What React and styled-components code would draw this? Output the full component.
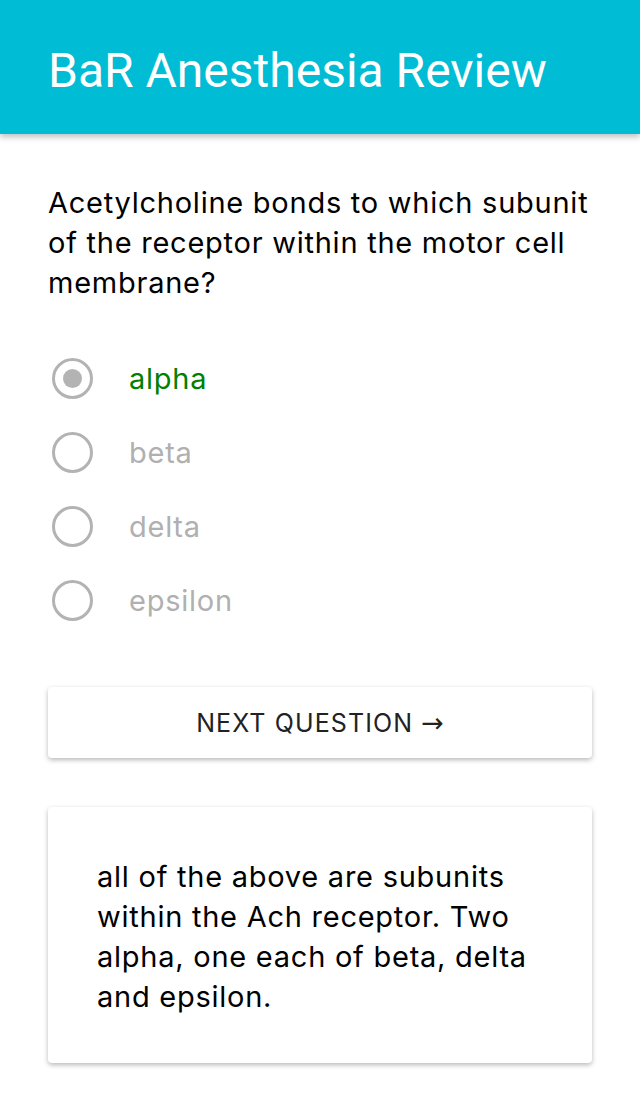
import styled, { createGlobalStyle } from "styled-components";

const Global = createGlobalStyle`
  body {
    margin: 0;
    background: #ffffff;
    font-family: Inter, "Noto Sans", sans-serif;
  }
`;

const Header = styled.header`
  height: 134px;
  box-sizing: border-box;
  background: #00bcd4;
  display: flex;
  align-items: center;
  padding: 6px 48px 0;
  box-shadow: 0 3px 6px rgba(0, 0, 0, 0.25);
`;

const Title = styled.h1`
  margin: 0;
  font-family: Roboto, sans-serif;
  font-weight: 400;
  font-size: 48px;
  color: #ffffff;
`;

const Main = styled.main`
  padding: 49px 48px 40px;
  display: flex;
  flex-direction: column;
`;

const Question = styled.p`
  margin: 0;
  font-size: 29px;
  letter-spacing: 0.75px;
  line-height: 40px;
  color: #000;
`;

const Options = styled.div`
  display: flex;
  flex-direction: column;
  margin-top: 38px;
`;

const Option = styled.label`
  display: flex;
  align-items: center;
  height: 74px;
  gap: 36px;
  padding-left: 4px;
  font-size: 29px;
  letter-spacing: 0.75px;
  color: ${({ $selected }) => ($selected ? "#008000" : "#b0b0b0")};
`;

const Radio = styled.span`
  box-sizing: border-box;
  width: 41px;
  height: 41px;
  border-radius: 50%;
  border: 3.5px solid #b3b3b3;
  display: flex;
  align-items: center;
  justify-content: center;

  &::after {
    content: "";
    width: 19px;
    height: 19px;
    border-radius: 50%;
    background: ${({ $checked }) => ($checked ? "#b3b3b3" : "transparent")};
  }
`;

const NextButton = styled.button`
  margin-top: 50px;
  height: 71px;
  border: none;
  border-radius: 4px;
  background: #fff;
  box-shadow: 0 2px 5px rgba(0, 0, 0, 0.28);
  font-family: Inter, "Noto Sans", sans-serif;
  font-size: 25px;
  letter-spacing: 1.1px;
  color: #222;
`;

const Arrow = styled.span`
  font-family: "DejaVu Sans", sans-serif;
  font-size: 27px;
  letter-spacing: 0;
`;

const Card = styled.div`
  margin-top: 49px;
  border-radius: 4px;
  background: #fff;
  box-shadow: 0 2px 5px rgba(0, 0, 0, 0.28);
  padding: 50px 49px 46px;
  font-size: 29px;
  letter-spacing: 0.75px;
  line-height: 40px;
  color: #000;
`;

const options = ["alpha", "beta", "delta", "epsilon"];

export default function App() {
  return (
    <>
      <Global />
      <Header>
        <Title>BaR Anesthesia Review</Title>
      </Header>
      <Main>
        <Question>
          Acetylcholine bonds to which subunit of the receptor within the motor
          cell membrane?
        </Question>
        <Options>
          {options.map((o, i) => (
            <Option key={o} $selected={i === 0}>
              <Radio $checked={i === 0} />
              {o}
            </Option>
          ))}
        </Options>
        <NextButton>
          NEXT QUESTION <Arrow>→</Arrow>
        </NextButton>
        <Card>
          all of the above are subunits within the Ach receptor. Two alpha, one
          each of beta, delta and epsilon.
        </Card>
      </Main>
    </>
  );
}
